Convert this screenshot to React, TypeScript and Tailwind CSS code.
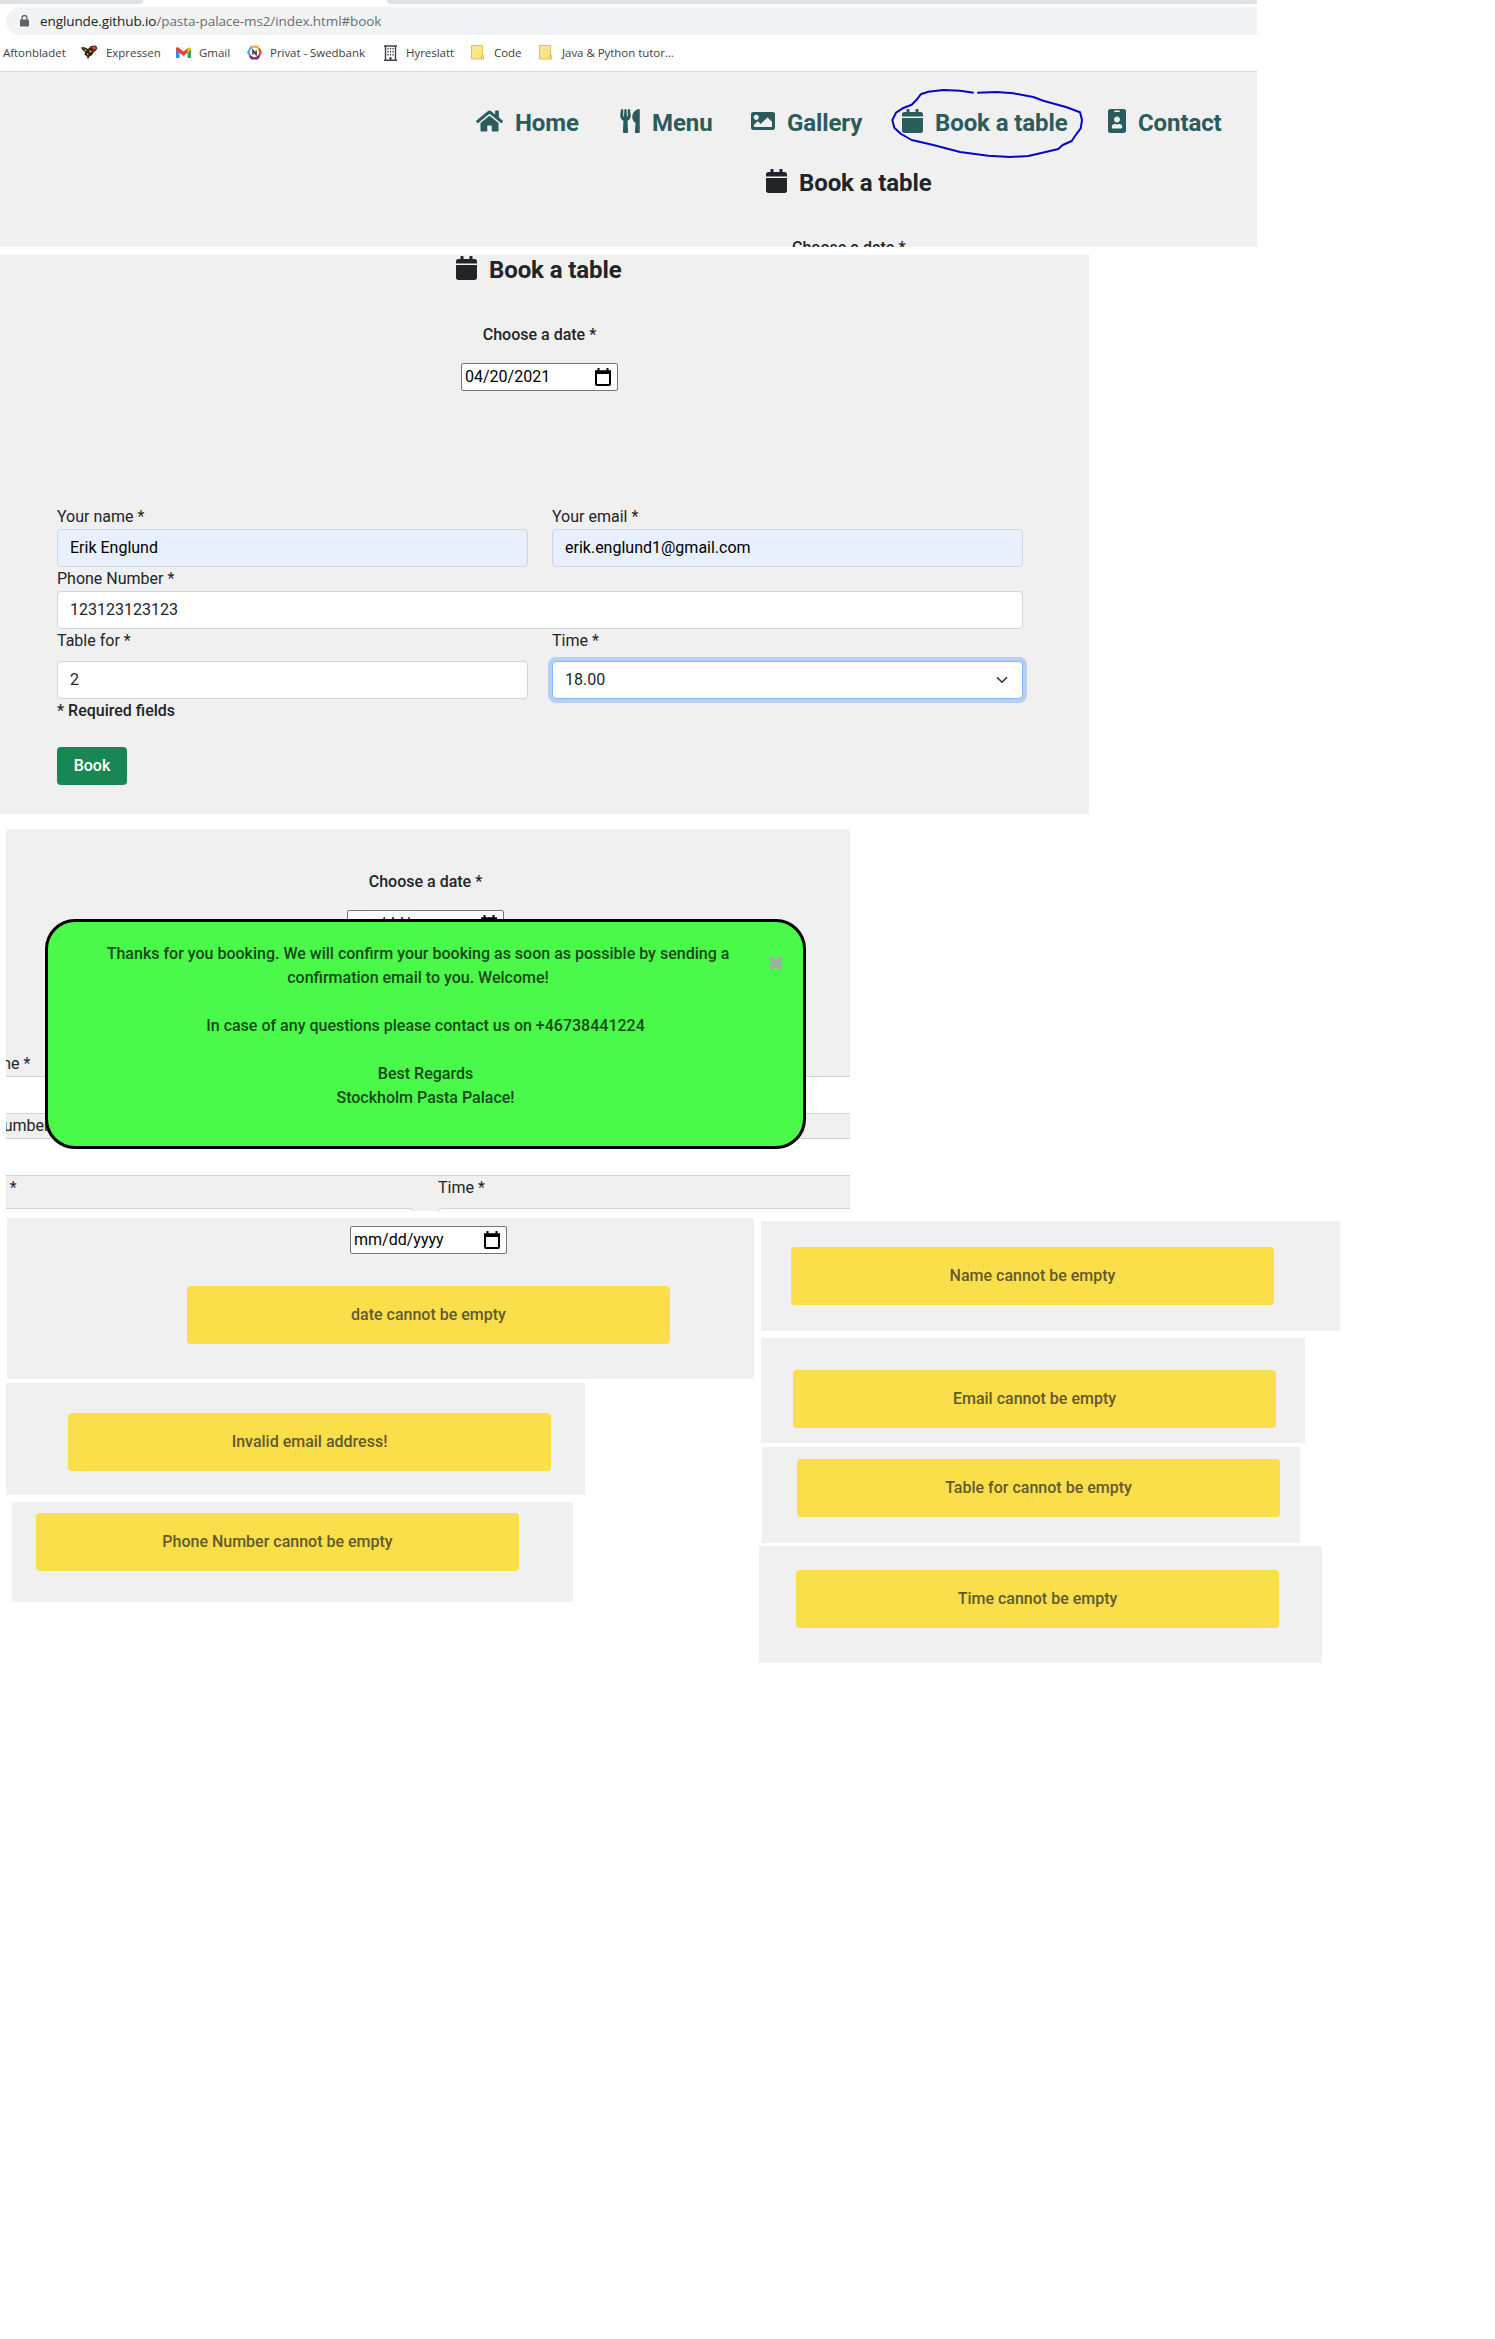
import React from "react";
import { FaHome, FaUtensils, FaImage, FaCalendar, FaIdBadge } from "react-icons/fa";

function DatePickerIcon() {
  return (
    <svg width="16" height="18" viewBox="0 0 16 18" fill="none">
      <path d="M1 3.5h14v12.5a1 1 0 0 1-1 1H2a1 1 0 0 1-1-1z" stroke="#000" strokeWidth="2" />
      <path d="M0 2.5h16V6H0zM2.5 0h2v3h-2zM11.5 0h2v3h-2z" fill="#000" />
    </svg>
  );
}

function DateInput({ value }: { value: string }) {
  return (
    <div className="flex h-7 w-[157px] items-center justify-between rounded-[2px] border border-[#767676] bg-white pl-[3px] pr-1.5 text-base leading-6 text-black">
      <span className="whitespace-nowrap">{value}</span>
      <DatePickerIcon />
    </div>
  );
}

function Field({ label, value, className = "", gap = "" }: { label: string; value: string; className?: string; gap?: string }) {
  return (
    <div>
      <div className={`h-6 leading-6 ${gap}`}>{label}</div>
      <div className={`flex h-[38px] items-center rounded border px-3 ${className}`}>{value}</div>
    </div>
  );
}

function BookingForm({ date, name, email, phone, seats, time, autofill, focused }: { date: string; name: string; email: string; phone: string; seats: string; time: string; autofill?: boolean; focused?: boolean }) {
  const plain = "border-[#ced4da] bg-white";
  const filled = autofill ? "border-[#ced4da] bg-[#e8f0fe] text-black" : plain;
  return (
    <div className="w-[1089px] shrink-0">
      <div className="flex w-[1079px] flex-col items-center">
        <div className="h-6 font-medium leading-6">Choose a date *</div>
        <div className="mt-4">
          <DateInput value={date} />
        </div>
      </div>
      <div className="ml-[57px] mt-[114px] w-[966px]">
        <div className="grid grid-cols-2 gap-x-6">
          <Field label="Your name *" value={name} className={filled} />
          <Field label="Your email *" value={email} className={filled} />
        </div>
        <Field label="Phone Number *" value={phone} className={plain} />
        <div className="grid grid-cols-2 gap-x-6">
          <Field label="Table for *" value={seats} className={plain} gap="mb-2" />
          <div>
            <div className="mb-2 h-6 leading-6">Time *</div>
            <div
              className={
                focused
                  ? "flex h-[38px] items-center justify-between rounded border border-[#86b7fe] bg-white px-3 shadow-[0_0_0_4px_rgba(13,110,253,0.25)]"
                  : "flex h-[38px] items-center justify-between rounded border border-[#ced4da] bg-white px-3"
              }
            >
              <span>{time}</span>
              <svg width="16" height="12" viewBox="0 0 16 16" fill="none" stroke="#343a40" strokeWidth="2.300" strokeLinecap="round" strokeLinejoin="round">
                <path d="M2 5l6 6 6-6" />
              </svg>
            </div>
          </div>
        </div>
        <div className="h-6 font-medium leading-6">* Required fields</div>
        <div className="mt-6 flex h-[38px] w-[70px] items-center justify-center rounded bg-[#198754] font-medium text-white">Book</div>
      </div>
    </div>
  );
}

function Warning({ text, className }: { text: string; className: string }) {
  return (
    <div className={`flex h-[58px] w-[483px] items-center justify-center rounded bg-[#fadf4b] font-medium text-[#625a2c] ${className}`}>
      {text}
    </div>
  );
}

function NavItem({ icon, label, className }: { icon: React.ReactNode; label: string; className: string }) {
  return (
    <div className={`flex shrink-0 items-center gap-3 ${className}`}>
      {icon}
      <span className="whitespace-nowrap pt-[3px]">{label}</span>
    </div>
  );
}

function Heading({ className }: { className: string }) {
  return (
    <div className={`flex h-7 items-center gap-3 text-2xl font-bold leading-7 tracking-[-0.1px] text-[#212529] ${className}`}>
      <FaCalendar className="h-6 w-[21px]" />
      <span className="pt-[3px]">Book a table</span>
    </div>
  );
}

function Folder() {
  return (
    <svg width="13" height="15" viewBox="0 0 13 15">
      <path d="M.5.5h11v9.500h1v4H.5z" fill="#ffe389" stroke="#e3c14f" />
      <path d="M10.500 10v4" stroke="#e3c14f" />
    </svg>
  );
}

function Browser() {
  return (
    <div className="h-[72px] w-[1257px] overflow-hidden border-b border-[#d9dadc] bg-white font-['Open_Sans',sans-serif]">
      <div className="flex h-[4px] justify-between">
        <div className="w-[143px] rounded-br-md bg-[#dee1e6]" />
        <div className="w-[870px] rounded-bl-md bg-[#dee1e6]" />
      </div>
      <div className="ml-1.5 mt-[3px] flex h-7 items-center rounded-l-full bg-[#f1f3f4] pl-[14px]">
        <svg width="9" height="12" viewBox="0 0 9 12">
          <rect y="4.500" width="9" height="7" rx="1" fill="#5f6368" />
          <path d="M2 5V3a2.500 2.500 0 0 1 5 0v2" fill="none" stroke="#5f6368" strokeWidth="1.300" />
        </svg>
        <span className="ml-[11px] whitespace-nowrap text-[13.5px] tracking-[-0.09px] text-[#6b6e72]">
          <span className="text-[#202124]">englunde.github.io</span>/pasta-palace-ms2/index.html#book
        </span>
      </div>
      <div className="flex h-[35px] items-center whitespace-nowrap pl-[3px] text-[11.5px] tracking-[-0.04px] text-[#3c4043]">
        <span className="w-[78px]">Aftonbladet</span>
        <span className="flex w-[25px] items-center">
          <svg width="17" height="15" viewBox="0 0 17 15">
            <path d="M0 2.500L3 2l4 2 3-3 5-.5 1.500 3-1.500 2-2 1.500-2 3-3 2L7 14.500l-1-3-2.500-2L4 7 1.500 5z" fill="#2a2115" />
            <path d="M10 2l4-1 2 2.500-3 1.500z" fill="#d8402a" />
            <path d="M3 3.500l3 2-1.500 1zM8 5l3 1-2 2zM5.500 8l2.500 1-1.500 1.500z" fill="#e9a92e" />
            <path d="M1 2.500l2.500.2-1 1.300zM11 6l2-.5-1 2z" fill="#d8402a" />
          </svg>
        </span>
        <span className="w-[70px]">Expressen</span>
        <span className="flex w-[23px] items-center">
          <svg width="15" height="11" viewBox="0 0 15 11">
            <path d="M0 1.500v9.500h3.500V4z" fill="#4285f4" />
            <path d="M11.500 4v7H15V1.500z" fill="#34a853" />
            <path d="M0 1.500C0 0 2 0 2.500.500l5 4 5-4v4.300L7.500 9 0 3z" fill="#ea4335" />
            <path d="M11.500 1.300C13 0 15 0 15 2v1l-3.500 2.800z" fill="#fbbc04" />
          </svg>
        </span>
        <span className="w-[48px]">Gmail</span>
        <span className="flex w-[23px] items-center">
          <svg width="15" height="15" viewBox="0 0 15 15">
            <path d="M4 .5h7l2 3.500-5.500 3z" fill="#fbb034" />
            <path d="M4 .5L0 7.500l3 5 4-5z" fill="#35b4d8" />
            <path d="M13 3l2 4.500-3 6-5-6z" fill="#ee4a23" />
            <path d="M2 11l2 3.500h7l2-3.500-5.500-4z" fill="#8a2a83" />
            <circle cx="7.500" cy="7.500" r="4.700" fill="#fff" />
            <path d="M5.900 9.800V5.200l3.200 4.600V5.200" fill="none" stroke="#222" strokeWidth="1.200" />
          </svg>
        </span>
        <span className="w-[114px]">Privat - Swedbank</span>
        <span className="flex w-[22px] items-center">
          <svg width="13" height="16" viewBox="0 0 13 16">
            <path d="M1.500 15V1h10v14M0 15.300h13M0 1h13" fill="none" stroke="#3c4050" strokeWidth="1.400" />
            <path d="M4 3v8M6.500 3v8M9 3v8" stroke="#3c4050" strokeWidth="1.300" strokeDasharray="1.500 1.500" />
            <path d="M5.500 12h2v3h-2z" fill="#3c4050" />
          </svg>
        </span>
        <span className="w-[65px]">Hyreslatt</span>
        <span className="flex w-[23px] items-center"><Folder /></span>
        <span className="w-[45px]">Code</span>
        <span className="flex w-[23px] items-center"><Folder /></span>
        <span>Java &amp; Python tutor...</span>
      </div>
    </div>
  );
}

export default function App() {
  return (
    <div className="h-[2339px] w-[1495px] overflow-hidden bg-white font-[Roboto,sans-serif] text-base leading-6 text-[#212529]">
      <Browser />
      <header className="relative h-[175px] w-[1257px] overflow-hidden bg-[#f0f0f0] pt-[35px]">
        <nav className="flex h-7 items-center pl-[476px] text-2xl font-bold leading-7 tracking-[-0.1px] text-[#295c5b]">
          <NavItem className="w-[144px]" icon={<FaHome className="h-6 w-[27px]" />} label="Home" />
          <NavItem className="w-[131px]" icon={<FaUtensils className="h-6 w-[20px]" />} label="Menu" />
          <NavItem className="w-[151px]" icon={<FaImage className="h-6 w-6" />} label="Gallery" />
          <NavItem className="w-[206px]" icon={<FaCalendar className="h-6 w-[21px]" />} label="Book a table" />
          <NavItem className="" icon={<FaIdBadge className="h-6 w-[18px]" />} label="Contact" />
        </nav>
        <Heading className="ml-[766px] mt-8" />
        <div className="ml-[792px] mt-[41px] h-6 font-medium leading-6">Choose a date *</div>
        <svg className="absolute left-[888px] top-[14px]" width="200" height="80" viewBox="888 86 200 80" fill="none" stroke="#0606c4" strokeWidth="2" strokeLinejoin="round">
          <path d="M973.700 92.700L960 90.700 943.300 90 928.300 91.700 920.700 94.300 917.300 99 911.700 104.700 902.700 108.300 896 112.700 892.300 120 894.300 127.700 901 134 911.700 140 933.300 145 960 152 988.300 155.700 1010 157 1028.300 156 1046.700 151.700 1058.300 149 1062.700 145 1071.700 141 1075 136 1080.700 128.300 1082 120 1080 112.300 1066.700 107.300 1043.300 100.700 1033.300 97 1013.300 93.300 996.700 92 977.300 92.700" />
        </svg>
      </header>

      <section className="mt-2 h-[559px] w-[1089px] overflow-hidden bg-[#f0f0f0]">
        <Heading className="ml-[456px] mt-[-1px]" />
        <div className="mt-[41px]">
          <BookingForm date="04/20/2021" name="Erik Englund" email="erik.englund1@gmail.com" phone="123123123123" seats="2" time="18.00" autofill focused />
        </div>
      </section>

      <section className="relative ml-1.5 mt-[15px] h-[382px] w-[844px] overflow-hidden bg-[#f0f0f0]">
        <div className="ml-[-120px] mt-[41px]">
          <BookingForm date="mm/dd/yyyy" name="" email="" phone="" seats="" time="" />
        </div>
        <div className="absolute left-[39px] top-[90px] h-[230px] w-[761px] rounded-[30px] border-[3px] border-black bg-[#4bf94a] pt-5 text-center font-medium leading-6 text-[#17491a]">
          <p className="mr-[15px]">
            Thanks for you booking. We will confirm your booking as soon as possible by sending a
            <br />
            confirmation email to you. Welcome!
          </p>
          <p className="mt-6">In case of any questions please contact us on +46738441224</p>
          <p className="mt-6">
            Best Regards
            <br />
            Stockholm Pasta Palace!
          </p>
          <svg className="absolute right-[20px] top-[34px]" width="14" height="14" viewBox="0 0 14 14" stroke="#a8a8a8" strokeWidth="4.600">
            <path d="M1.500 1.500l11 11M12.500 1.500l-11 11" />
          </svg>
        </div>
      </section>

      <div className="flex items-start">
        <div className="w-[759px]">
          <div className="ml-[7px] mt-[7px] h-[161px] w-[747px] bg-[#f0f0f0] pt-2">
            <div className="ml-[343px]">
              <DateInput value="mm/dd/yyyy" />
            </div>
            <Warning className="ml-[180px] mt-8" text="date cannot be empty" />
          </div>
          <div className="ml-1.5 mt-1 h-[112px] w-[579px] bg-[#f0f0f0] pt-[30px]">
            <Warning className="ml-[62px]" text="Invalid email address!" />
          </div>
          <div className="ml-3 mt-[7px] h-[100px] w-[561px] bg-[#f0f0f0] pt-[11px]">
            <Warning className="ml-6" text="Phone Number cannot be empty" />
          </div>
        </div>
        <div>
          <div className="ml-0.5 mt-[10px] h-[110px] w-[579px] bg-[#f0f0f0] pt-[26px]">
            <Warning className="ml-[30px]" text="Name cannot be empty" />
          </div>
          <div className="ml-0.5 mt-[7px] h-[105px] w-[544px] bg-[#f0f0f0] pt-8">
            <Warning className="ml-8" text="Email cannot be empty" />
          </div>
          <div className="ml-[3px] mt-1 h-24 w-[538px] bg-[#f0f0f0] pt-3">
            <Warning className="ml-[35px]" text="Table for cannot be empty" />
          </div>
          <div className="mt-[3px] h-[117px] w-[563px] bg-[#f0f0f0] pt-6">
            <Warning className="ml-[37px]" text="Time cannot be empty" />
          </div>
        </div>
      </div>
    </div>
  );
}
